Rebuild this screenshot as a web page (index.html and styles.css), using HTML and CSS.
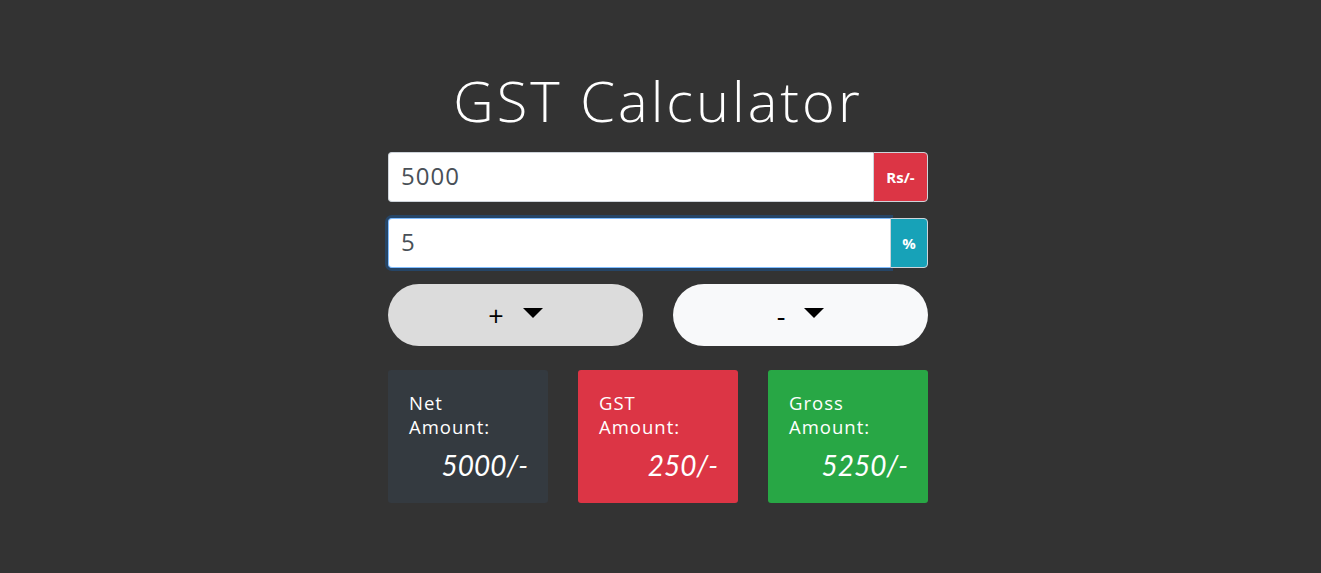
FILE: index.html
```html
<!DOCTYPE html>
<html lang="en">
<head>
<meta charset="utf-8">
<title>GST Calculator</title>
<link rel="stylesheet" href="styles.css">
</head>
<body>
<div class="page">
  <main class="calc">
    <h1 class="title">GST Calculator</h1>
    <div class="field">
      <input class="input" type="text" value="5000">
      <span class="addon addon-red">Rs/-</span>
    </div>
    <div class="field field-focus">
      <input class="input" type="text" value="5">
      <span class="addon addon-teal">%</span>
    </div>
    <div class="buttons">
      <button class="pill pill-grey">+<span class="caret"></span></button>
      <button class="pill pill-light">-<span class="caret"></span></button>
    </div>
    <div class="cards">
      <div class="card card-dark">
        <div class="label">Net<br>Amount:</div>
        <div class="amount">5000/-</div>
      </div>
      <div class="card card-red">
        <div class="label">GST<br>Amount:</div>
        <div class="amount">250/-</div>
      </div>
      <div class="card card-green">
        <div class="label">Gross<br>Amount:</div>
        <div class="amount">5250/-</div>
      </div>
    </div>
  </main>
</div>
</body>
</html>
```
FILE: styles.css
```css
* { box-sizing: border-box; }
html, body {
  margin: 0;
  height: 100%;
}
body {
  background: #333333;
  font-family: "Open Sans", "Noto Sans", sans-serif;
  color: #ffffff;
}
.page {
  padding-right: 5px;
}
.calc {
  width: 540px;
  margin: 0 auto;
  padding-top: 67px;
  display: flex;
  flex-direction: column;
}
.title {
  margin: 0 0 18px;
  font-size: 56px;
  font-weight: 300;
  line-height: 67px;
  text-align: center;
  letter-spacing: 3px;
}
.field {
  display: flex;
  height: 50px;
  margin-bottom: 16px;
}
.input {
  flex: 1;
  min-width: 0;
  height: 50px;
  padding: 0 12px 3px;
  border: 1px solid #ced4da;
  border-right: 0;
  border-radius: 4px 0 0 4px;
  background: #ffffff;
  color: #495057;
  font-family: "Open Sans", "Noto Sans", sans-serif;
  font-size: 24px;
  letter-spacing: 1px;
  outline: none;
}
.field-focus .input {
  border: 1px solid #80bdff;
  border-right: 0;
  box-shadow: 0 0 0 3px rgba(0, 123, 255, 0.25);
}
.addon {
  display: flex;
  align-items: center;
  justify-content: center;
  border: 1px solid #ced4da;
  border-radius: 0 4px 4px 0;
  color: #ffffff;
  font-size: 15px;
  font-weight: 700;
  position: relative;
}
.addon-red {
  width: 55px;
  background: #dc3545;
}
.addon-teal {
  width: 38px;
  background: #17a2b8;
}
.buttons {
  display: flex;
  gap: 30px;
  margin-bottom: 24px;
}
.pill {
  flex: 1;
  height: 62px;
  border: 0;
  border-radius: 31px;
  display: flex;
  align-items: center;
  justify-content: center;
  color: #000000;
  font-family: "Open Sans", "Noto Sans", sans-serif;
  font-size: 27px;
  font-weight: 400;
  line-height: 1;
  padding: 0;
}
.pill-grey { background: #dcdcdc; }
.pill-light { background: #f8f9fa; }
.caret {
  width: 0;
  height: 0;
  margin-left: 19px;
  margin-top: -4px;
  border-left: 10px solid transparent;
  border-right: 10px solid transparent;
  border-top: 10px solid #000000;
}
.cards {
  display: flex;
  gap: 30px;
}
.card {
  width: 160px;
  height: 133px;
  border-radius: 3px;
  padding: 21px 20px 0 21px;
  display: flex;
  flex-direction: column;
}
.card-dark { background: #343a40; }
.card-red { background: #dc3545; }
.card-green { background: #28a745; }
.label {
  font-size: 18.5px;
  line-height: 24px;
  font-weight: 400;
  letter-spacing: 1px;
}
.amount {
  margin-top: 9px;
  text-align: right;
  font-family: Lato, sans-serif;
  font-style: italic;
  font-size: 28px;
  line-height: 34px;
}
```
